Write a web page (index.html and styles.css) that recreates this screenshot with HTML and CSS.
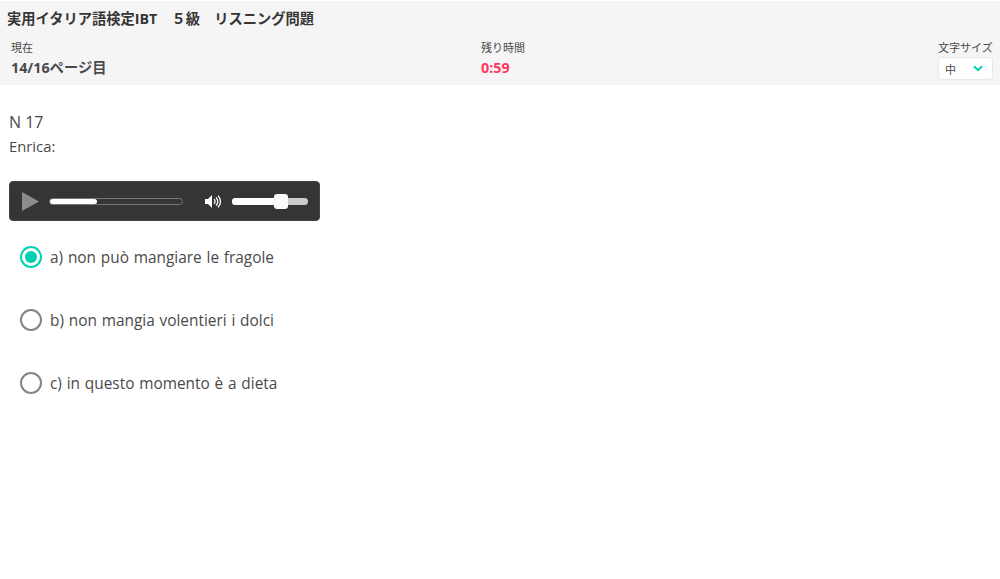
FILE: index.html
```html
<!DOCTYPE html>
<html lang="ja">
<head>
<meta charset="utf-8">
<title>実用イタリア語検定IBT</title>
<link rel="stylesheet" href="styles.css">
</head>
<body>
<header class="header">
  <h1 class="title">実用イタリア語検定IBT　５級　リスニング問題</h1>
  <div class="status">
    <div class="stat">
      <div class="label">現在</div>
      <div class="value">14/16ページ目</div>
    </div>
    <div class="stat stat-time">
      <div class="label">残り時間</div>
      <div class="value value-time">0:59</div>
    </div>
    <div class="stat stat-size">
      <div class="label">文字サイズ</div>
      <div class="select">
        <span>中</span>
        <svg class="chev" width="10" height="7" viewBox="0 0 10 7"><path d="M1 1.2 5 5.2 9 1.2" fill="none" stroke="#00d1b2" stroke-width="2"/></svg>
      </div>
    </div>
  </div>
</header>
<main class="main">
  <p class="question">N 17</p>
  <p class="question question-sub">Enrica:</p>
  <div class="player">
    <svg class="play" width="18" height="19" viewBox="0 0 18 19"><path d="M0 0 17 9.5 0 19Z" fill="#8c8c8c"/></svg>
    <div class="seek"><div class="seek-fill"></div></div>
    <svg class="speaker" width="17" height="15" viewBox="0 0 17 15"><path d="M0 5h3l4-4v13l-4-4H0Z" fill="#fff"/><path d="M9 5.2a3 3 0 0 1 0 4.6M11 3.4a5.6 5.6 0 0 1 0 8.2M13 1.6a8.2 8.2 0 0 1 0 11.8" fill="none" stroke="#fff" stroke-width="1.3"/></svg>
    <div class="volume"><div class="volume-fill"></div><div class="volume-thumb"></div></div>
  </div>
  <ul class="options">
    <li class="option"><span class="radio radio-on"></span><span class="option-text">a) non può mangiare le fragole</span></li>
    <li class="option"><span class="radio"></span><span class="option-text">b) non mangia volentieri i dolci</span></li>
    <li class="option"><span class="radio"></span><span class="option-text">c) in questo momento è a dieta</span></li>
  </ul>
</main>
</body>
</html>
```
FILE: styles.css
```css
* { box-sizing: border-box; }
html, body { margin: 0; padding: 0; }
body {
  background: #fff;
  color: #4a4a4a;
  font-family: "Open Sans", "Noto Sans CJK JP", sans-serif;
  height: 579px;
  overflow: hidden;
}
.header {
  background: #f5f5f5;
  height: 84px;
  padding: 8px 7px 0 7px;
  margin-top: 1px;
}
.title {
  margin: 0;
  font-size: 14.25px;
  line-height: 20px;
  font-weight: 700;
  color: #363636;
}
.status {
  display: flex;
  justify-content: space-between;
  margin-top: 10px;
  padding: 0 0 0 4px;
}
.stat { width: 470px; }
.stat-time { flex: 1; }
.stat-size { width: 55px; flex: none; }
.label { font-size: 11px; line-height: 18px; color: #4a4a4a; white-space: nowrap; }
.value { font-size: 14.3px; line-height: 21px; font-weight: 700; color: #4a4a4a; white-space: nowrap; }
.value-time { color: #ff3860; }
.select {
  display: flex;
  align-items: center;
  justify-content: space-between;
  width: 55px;
  height: 23px;
  background: #fff;
  border: 1px solid #e8e8e8;
  border-radius: 4px;
  padding: 0 9px 0 6px;
  font-size: 11px;
}
.main { padding: 25px 9px 0; }
.question { margin: 0; font-size: 16px; line-height: 24px; }
.question-sub { font-size: 14.8px; }
.player {
  display: flex;
  align-items: center;
  width: 311px;
  height: 40px;
  margin-top: 23px;
  background: #353535;
  border: 1px solid #444;
  border-radius: 4px;
  padding-left: 12px;
}
.seek {
  width: 134px;
  height: 7px;
  margin-left: 9px;
  border: 1px solid #777;
  border-radius: 4px;
}
.seek-fill { width: 47px; height: 5px; background: #fff; border-radius: 3px; }
.speaker { margin-left: 22px; }
.volume {
  position: relative;
  width: 76px;
  height: 7px;
  margin-left: 10px;
  background: #ccc;
  border-radius: 4px;
}
.volume-fill { width: 50px; height: 7px; background: #fff; border-radius: 4px; }
.volume-thumb {
  position: absolute;
  left: 42px;
  top: -4px;
  width: 14px;
  height: 15px;
  background: #fafafa;
  border-radius: 3px;
}
.options { list-style: none; margin: 4px 0 0; padding: 0 0 0 11px; }
.option {
  display: flex;
  align-items: center;
  height: 63px;
  font-size: 15.4px;
  word-spacing: 0.8px;
  color: #4a4a4a;
}
.option-text { padding-top: 2px; }
.radio {
  position: relative;
  width: 22px;
  height: 22px;
  margin-right: 8px;
  border: 2px solid #858585;
  border-radius: 50%;
  background: #fff;
}
.radio-on { border-color: #00d1b2; }
.radio-on::after {
  content: "";
  position: absolute;
  left: 3px;
  top: 3px;
  width: 12px;
  height: 12px;
  border-radius: 50%;
  background: #00d1b2;
}
```
